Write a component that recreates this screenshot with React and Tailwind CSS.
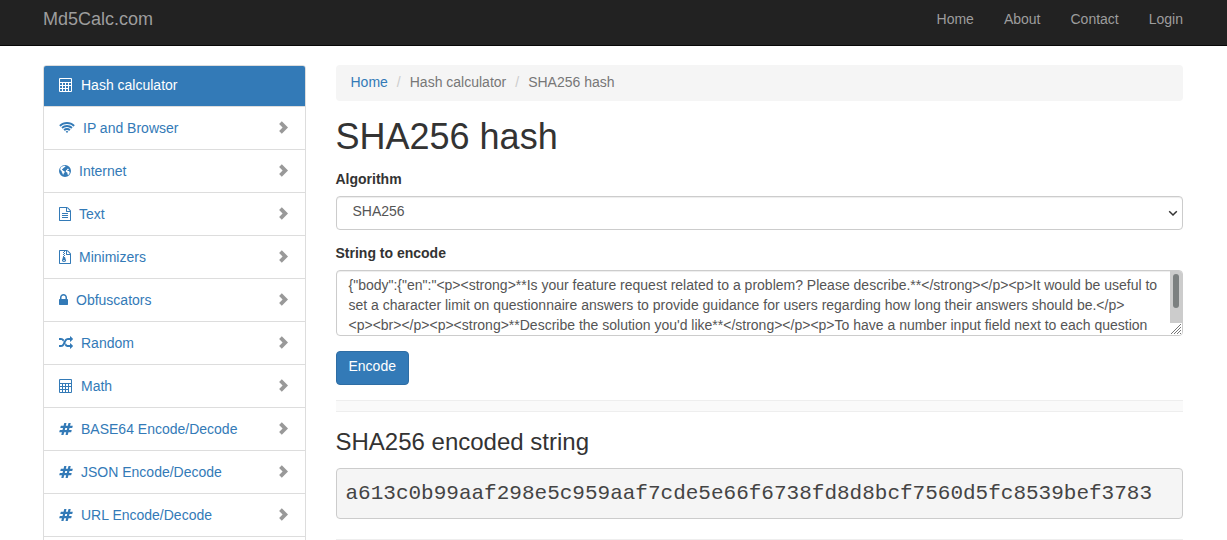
import React from "react";

const CALCULATOR =
  "M256 192v256q0 64 64 64h1280q64 0 64-64v-256q0-64-64-64h-1280q-64 0-64 64zM256 640h256v256h-256zM640 640h256v256h-256zM1024 640h256v256h-256zM1408 640h256v256h-256zM256 1024h256v256h-256zM640 1024h256v256h-256zM1024 1024h256v256h-256zM256 1408h256v256h-256zM640 1408h256v256h-256zM1024 1408h256v256h-256zM1408 1024h256v640h-256zM256 0h1408q128 0 128 128v1536q0 128-128 128h-1408q-128 0-128-128v-1536q0-128 128-128z";

const ICONS = {
  calculator: { box: "128 0 1792 1792", size: "w-[14px]", d: CALCULATOR },
  wifi: {
    box: "0 0 2048 1792",
    size: "w-[16px]",
    d: "M1024 1523q-20 0-93-73.5t-73-93.500q0-32 62.500-54t103.500-22 103.500 22 62.500 54q0 20-73 93.500t-93 73.500zM1294 1252q-2 0-40-25t-101.500-50-128.500-25-128.500 25-101 50-40.500 25q-18 0-93.500-75t-75.500-93q0-13 10-23 78-77 196-121t233-44 233 44 196 121q10 10 10 23 0 18-75.500 93t-93.500 75zM1567 980q-11 0-23-8-136-105-252-154.500t-268-49.500q-85 0-170.500 22t-149 53-113.500 62-79 53-31 22q-17 0-92-75t-75-93q0-12 10-22 132-132 320-205t380-73 380 73 320 205q10 10 10 22 0 18-75 93t-92 75zM1838 709q-11 0-22-9-179-157-371.500-236.500t-420.500-79.500-420.500 79.500-371.500 236.500q-11 9-22 9-17 0-92.500-75t-75.500-93q0-13 10-23 187-186 445-288t527-102 527 102 445 288q10 10 10 23 0 18-75.500 93t-92.500 75z",
  },
  globe: {
    box: "128 0 1536 1792",
    size: "w-[12px]",
    d: "M896 128a768 768 0 1 0 0 1536a768 768 0 1 0 0-1536zM1170 649l60-35 85-8 60 30 40 70-50 35-65-15-50 45-60 30 25 75 80 15 90-10 60 90 50 100-20 110-80 130-60 90-90-20-40-150-20-130-100-30-90-90 10-130 70-80 80-20zM620 280l170-50 130 20 50 70-110 60-60 80-110 50-60 90-90 40-30 90 80 40 60 90 120 40 90 90-30 130-100 90-50 160-80-50-40-170-80-110-20-130-110-90-70-130 40-180 110-150z",
  },
  text: {
    box: "128 0 1536 1792",
    size: "w-[12px]",
    d: "M1596 380q28 28 48 76t20 88v1152q0 40-28 68t-68 28h-1344q-40 0-68-28t-28-68v-1600q0-40 28-68t68-28h896q40 0 88 20t76 48zm-444-244v376h376q-10-29-22-41l-313-313q-12-12-41-22zm384 1528v-1024h-416q-40 0-68-28t-28-68v-416h-768v1536h1280zm-1024-864q0-14 9-23t23-9h704q14 0 23 9t9 23v64q0 14-9 23t-23 9h-704q-14 0-23-9t-9-23v-64zm736 224q14 0 23 9t9 23v64q0 14-9 23t-23 9h-704q-14 0-23-9t-9-23v-64q0-14 9-23t23-9h704zm0 256q14 0 23 9t9 23v64q0 14-9 23t-23 9h-704q-14 0-23-9t-9-23v-64q0-14 9-23t23-9h704z",
  },
  archive: {
    box: "128 0 1536 1792",
    size: "w-[12px]",
    d: "M1596 380q28 28 48 76t20 88v1152q0 40-28 68t-68 28h-1344q-40 0-68-28t-28-68v-1600q0-40 28-68t68-28h896q40 0 88 20t76 48zm-444-244v376h376q-10-29-22-41l-313-313q-12-12-41-22zm384 1528v-1024h-416q-40 0-68-28t-28-68v-416h-128v128h-128v-128h-512v1536h1280zM640 256h128v128h-128zM768 384h128v128h-128zM640 512h128v128h-128zM768 640h128v128h-128zM640 768h128v128h128l107 349q21 66 21 115 0 80-75 124t-181 44-181-44-75-124q0-49 21-115l107-349zM768 1280q-53 0-90.500 19t-37.500 45 37.500 45 90.500 19 90.500-19 37.500-45-37.500-45-90.500-19z",
  },
  lock: {
    box: "320 0 1152 1792",
    size: "w-[9px]",
    d: "M640 768h512v-192q0-106-75-181t-181-75-181 75-75 181v192zm832 96v576q0 40-28 68t-68 28h-960q-40 0-68-28t-28-68v-576q0-40 28-68t68-28h32v-192q0-184 132-316t316-132 316 132 132 316v192h32q40 0 68 28t28 68z",
  },
  random: {
    box: "0 0 1792 1792",
    size: "w-[14px]",
    d: "M666 481q-60 92-137 273-22-45-37-72.500t-40.500-63.500-51-56.500-63-35-81.500-14.500h-224q-14 0-23-9t-9-23v-192q0-14 9-23t23-9h224q250 0 410 225zm1126 799q0 14-9 23l-320 320q-9 9-23 9-13 0-22.500-9.500t-9.500-22.500v-192q-32 0-85 .5t-81 1-73-1-71-5-64-10.500-63-18.500-58-28.500-59-40-55-53.500-56-69.500q59-93 136-273 22 45 37 72.500t40.500 63.500 51 56.500 63 35 81.500 14.500h256v-192q0-14 9-23t23-9q12 0 24 10l319 319q9 9 9 23zm0-896q0 14-9 23l-320 320q-9 9-23 9-13 0-22.500-9.500t-9.500-22.500v-192h-256q-48 0-87 15t-69 45-51 61.500-45 77.500q-32 62-78 171-29 66-49.500 111t-54 105-64 100-74 83-90 68.500-106.500 42-128 16.500h-224q-14 0-23-9t-9-23v-192q0-14 9-23t23-9h224q48 0 87-15t69-45 51-61.500 45-77.500q32-62 78-171 29-66 49.500-111t54-105 64-100 74-83 90-68.500 106.500-42 128-16.500h256v-192q0-14 9-23t23-9q12 0 24 10l319 319q9 9 9 23z",
  },
  hash: {
    box: "0 0 1792 1792",
    size: "w-[14px]",
    d: "M991 1024l64-256h-254l-64 256h254zm768-504l-56 224q-7 24-31 24h-327l-64 256h311q15 0 25 12 10 14 6 28l-56 224q-5 24-31 24h-327l-81 328q-7 24-31 24h-224q-16 0-26-12-9-12-6-28l78-312h-254l-81 328q-7 24-31 24h-225q-15 0-25-12-9-12-6-28l78-312h-311q-15 0-25-12-9-12-6-28l56-224q7-24 31-24h327l64-256h-311q-15 0-25-12-10-14-6-28l56-224q5-24 31-24h327l81-328q7-24 32-24h224q15 0 25 12 9 12 6 28l-78 312h254l81-328q7-24 32-24h224q15 0 25 12 9 12 6 28l-78 312h311q15 0 25 12 9 12 6 28z",
  },
};

const MENU = [
  ["IP and Browser", "wifi"],
  ["Internet", "globe"],
  ["Text", "text"],
  ["Minimizers", "archive"],
  ["Obfuscators", "lock"],
  ["Random", "random"],
  ["Math", "calculator"],
  ["BASE64 Encode/Decode", "hash"],
  ["JSON Encode/Decode", "hash"],
  ["URL Encode/Decode", "hash"],
];

const SOURCE =
  '{"body":{"en":"<p><strong>**Is your feature request related to a problem? Please describe.**</strong></p><p>It would be useful to set a character limit on questionnaire answers to provide guidance for users regarding how long their answers should be.</p>\n<p><br></p><p><strong>**Describe the solution you\'d like**</strong></p><p>To have a number input field next to each question that sets the maximum number of characters allowed.</p><p><br></p>"}}';

function Icon({ name }) {
  const { box, size, d } = ICONS[name];
  return (
    <svg viewBox={box} className={`h-[14px] shrink-0 ${size}`} fill="currentColor" fillRule="evenodd" aria-hidden="true">
      <path d={d} />
    </svg>
  );
}

function Chevron() {
  return (
    <svg viewBox="0 0 14 14" className="ml-auto size-[14px] shrink-0 text-[#999]" fill="currentColor" aria-hidden="true">
      <path d="M5.800 0.300L12 6.500L5.800 12.700L3.100 10L6.600 6.500L3.100 3Z" />
    </svg>
  );
}

const FIELD =
  "block w-full rounded border border-[#ccc] bg-white text-sm text-[#555] shadow-[inset_0_1px_1px_rgba(0,0,0,0.075)]";

export default function App() {
  return (
    <div className="flex h-screen flex-col overflow-hidden bg-white font-['Liberation_Sans',Arial,sans-serif] text-sm leading-5 text-[#333]">
      <header className="border-b border-[#080808] bg-[#222] pr-px">
        <div className="mx-auto flex h-[45px] max-w-[1170px] items-start justify-between px-[15px] pt-[9px] text-[#9d9d9d]">
          <a href="#" className="text-lg leading-5">Md5Calc.com</a>
          <nav className="flex gap-[30px]">
            <a href="#">Home</a>
            <a href="#">About</a>
            <a href="#">Contact</a>
            <a href="#">Login</a>
          </nav>
        </div>
      </header>
      <div className="flex grow flex-col pr-px">
        <div className="mx-auto grid w-full max-w-[1170px] grow grid-cols-[minmax(0,1fr)_minmax(0,3fr)] pt-[19px]">
          <aside className="px-[15px]">
            <nav className="h-full rounded-t border border-b-0 border-[#ddd]">
              <a href="#" className="flex h-10 items-center gap-2 rounded-t-[2px] bg-[#337ab7] px-[15px] pb-0.5 text-white">
                <Icon name="calculator" />
                Hash calculator
              </a>
              {MENU.map(([label, icon]) => (
                <a
                  key={label}
                  href="#"
                  className="flex h-[43px] items-center gap-2 border-t border-[#ddd] px-[15px] text-[#337ab7] last:h-11 last:border-b"
                >
                  <Icon name={icon} />
                  {label}
                  <Chevron />
                </a>
              ))}
            </nav>
          </aside>
          <main className="px-[15px]">
            <nav aria-label="Breadcrumb" className="rounded bg-[#f5f5f5] px-[15px] pt-[7px] pb-[9px] text-[#777]">
              <ol className="flex">
                <li>
                  <a href="#" className="text-[#337ab7]">Home</a>
                </li>
                <li className="before:px-[9px] before:text-[#ccc] before:content-['/']">Hash calculator</li>
                <li className="before:px-[9px] before:text-[#ccc] before:content-['/']">SHA256 hash</li>
              </ol>
            </nav>
            <h1 className="mt-4 text-4xl leading-10">SHA256 hash</h1>
            <form onSubmit={(e) => e.preventDefault()}>
              <label htmlFor="algorithm" className="mt-3 mb-[7px] block font-bold">Algorithm</label>
              <div className="relative">
                <select id="algorithm" className={`${FIELD} h-[34px] appearance-none px-4 pb-1`} defaultValue="SHA256">
                  <option>MD5</option>
                  <option>SHA1</option>
                  <option>SHA256</option>
                  <option>SHA512</option>
                </select>
                <svg
                  viewBox="0 0 10 10"
                  className="pointer-events-none absolute top-[12px] right-[5px] size-[10px] text-[#333]"
                  fill="none"
                  stroke="currentColor"
                  strokeWidth="1.500"
                  aria-hidden="true"
                >
                  <path d="M1.200 3.200L5 7L8.800 3.200" />
                </svg>
              </div>
              <label htmlFor="source" className="mt-[13px] mb-[7px] block font-bold">String to encode</label>
              <div className="relative">
                <textarea
                  id="source"
                  defaultValue={SOURCE}
                  className={`${FIELD} h-[66px] resize-none py-1 pr-[22px] pl-3 leading-5`}
                />
                <div
                  aria-hidden="true"
                  className="pointer-events-none absolute inset-y-px right-px flex w-3 flex-col items-center justify-between rounded-r-[3px] bg-[linear-gradient(#ccc_0_52px,#fff_52px)] pt-[3px]"
                >
                  <div className="h-[34px] w-1.5 rounded-full bg-[#7c8080]" />
                  <svg viewBox="0 0 12 12" className="size-3" fill="none" stroke="#777" strokeWidth="1">
                    <path d="M1 11L11 1M4 11L11 4M7 11L11 7M10 11L11 10" />
                  </svg>
                </div>
              </div>
              <button type="submit" className="mt-[15px] block h-[34px] rounded border border-[#2e6da4] bg-[#337ab7] px-3 pb-1 text-white">
                Encode
              </button>
            </form>
            <div className="mt-[15px] h-3 border-y border-[#eee] bg-[#fafafa]" />
            <h2 className="mt-4 text-2xl leading-7">SHA256 encoded string</h2>
            <output className="mt-3 block rounded border border-[#ccc] bg-[#f5f5f5] px-[9px] py-[9px] font-['Liberation_Mono','Courier_New',monospace] text-[21px] leading-[31px] text-[#444]">
              a613c0b99aaf298e5c959aaf7cde5e66f6738fd8d8bcf7560d5fc8539bef3783
            </output>
            <hr className="mt-5 border-[#eee]" />
          </main>
        </div>
      </div>
    </div>
  );
}
